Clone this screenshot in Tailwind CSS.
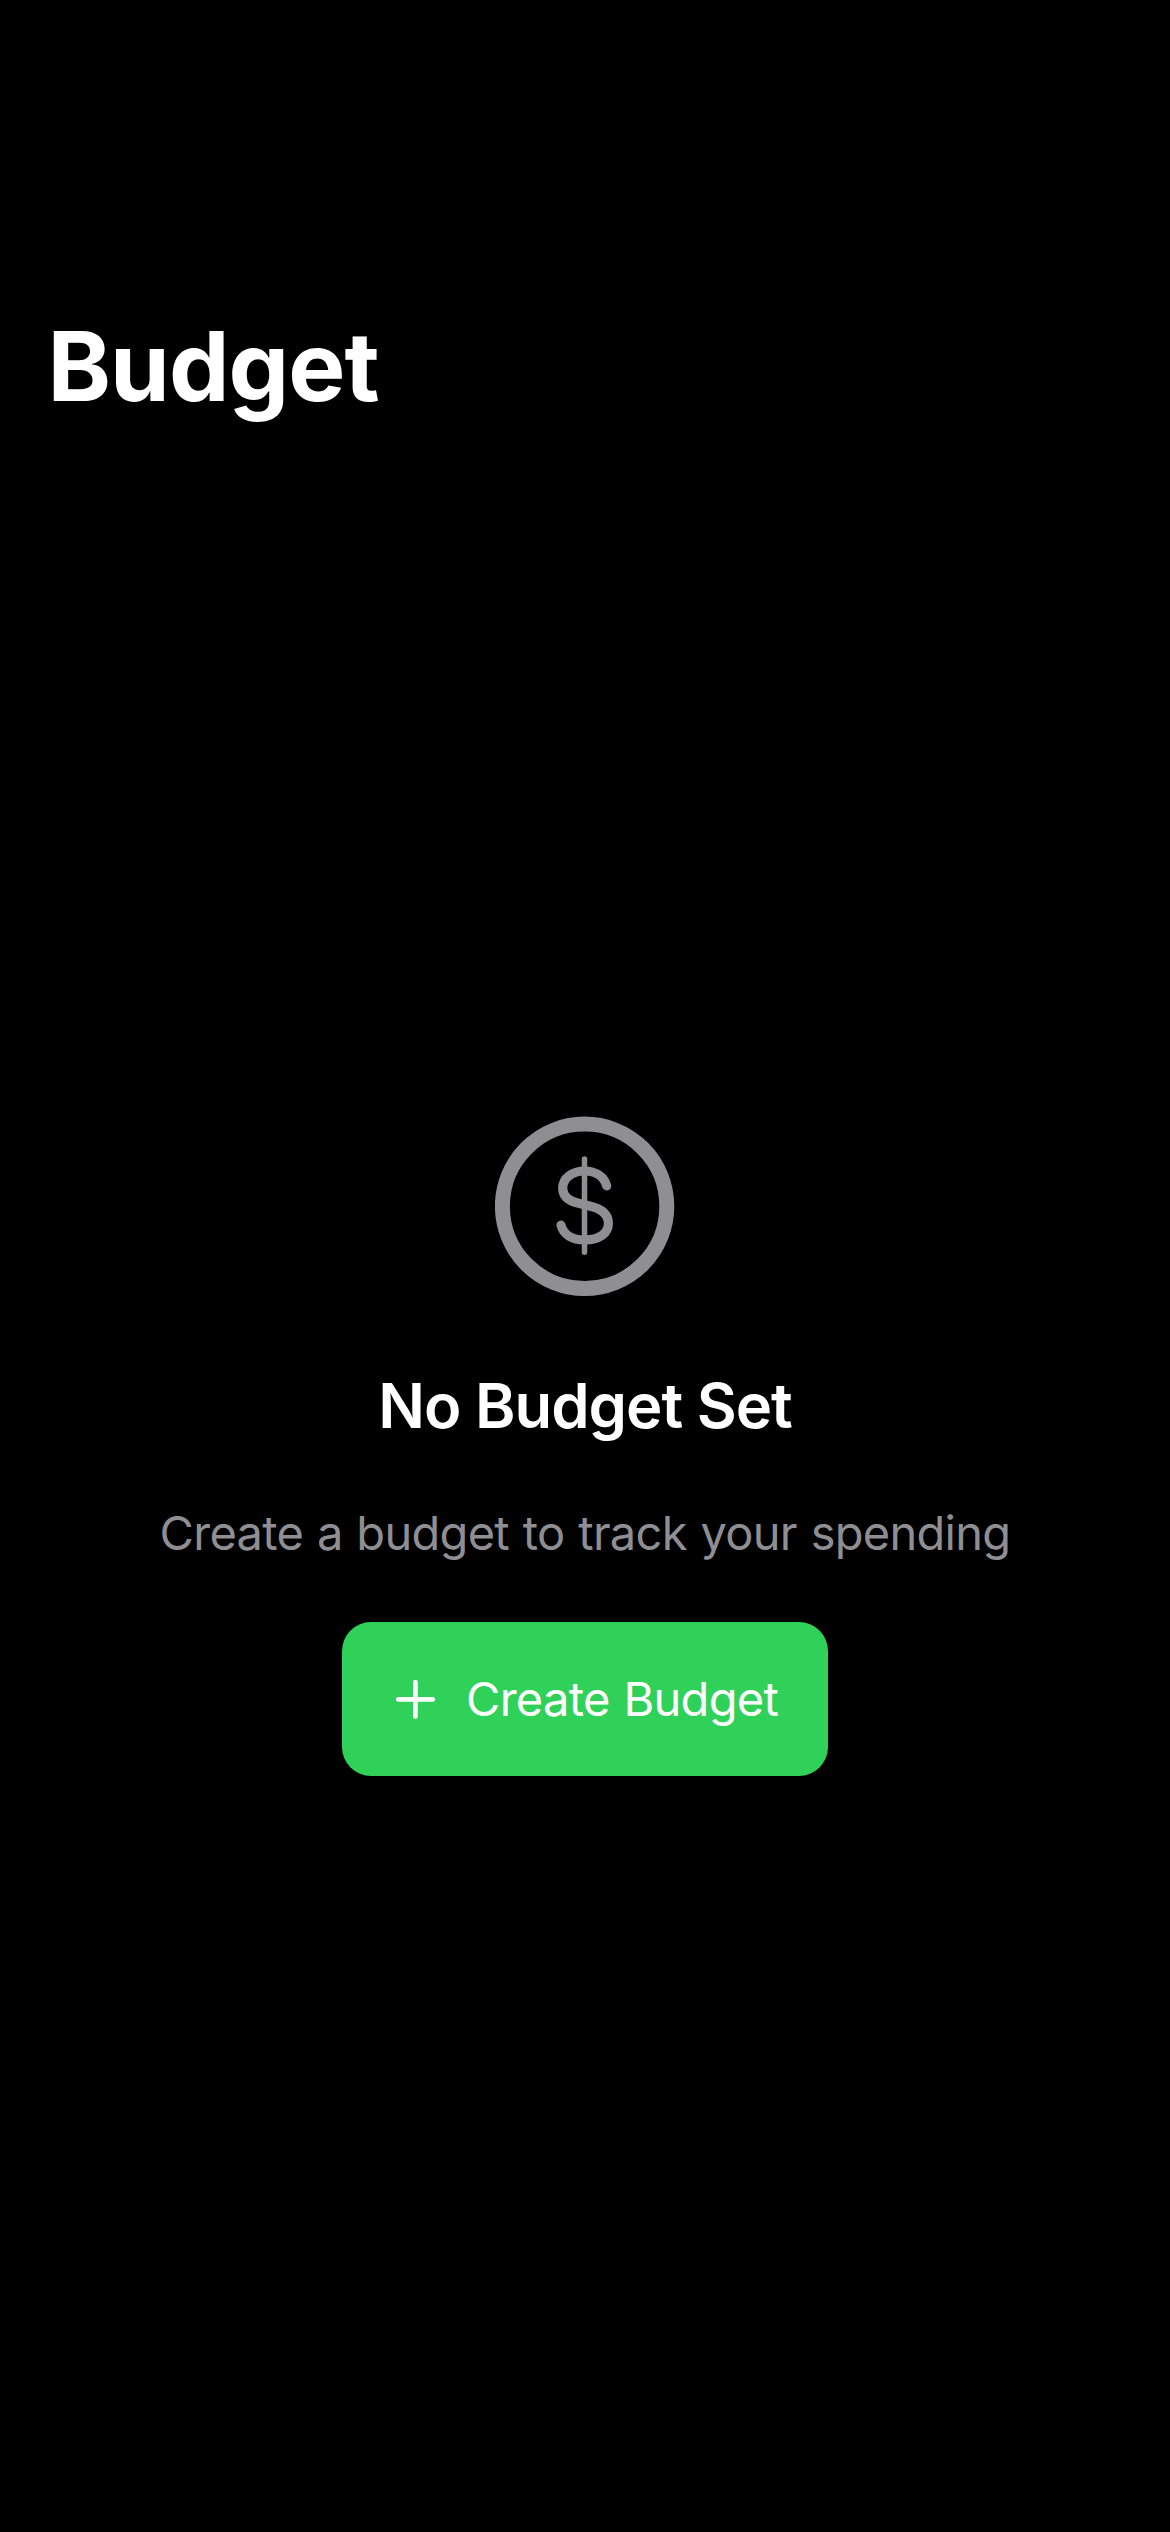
<!DOCTYPE html>
<html lang="en">
<head>
<meta charset="utf-8">
<title>Budget</title>
<script src="https://cdn.jsdelivr.net/npm/@tailwindcss/browser@4"></script>
</head>
<body class="bg-black">
<div class="flex h-[2532px] w-[1170px] flex-col bg-black font-['Inter',sans-serif] text-white">
  <header class="px-[47.5px] pt-[305px]">
    <h1 class="text-[96px] leading-[123px] font-bold tracking-[-0.95px]">Budget</h1>
  </header>
  <main class="flex flex-col items-center pt-[688px]">
    <svg class="h-[180px] w-[180px]" viewBox="0 0 180 180" fill="none" stroke="#8e8e93" stroke-linecap="round">
      <circle cx="89.6" cy="90.3" r="82.2" stroke-width="15"/>
      <path d="M89.5 43V136.3" stroke-width="5.5"/>
      <path d="M111.7 69.8C108.8 60.5 100.5 55 89.9 55C77 55 67.7 62 67.7 72.2C67.7 80.5 73.8 85.2 84.5 87.6L94.5 89.9C107 92.7 113.4 98.2 113.4 107.3C113.4 117.8 104 124 89.6 124C77.2 124 68.4 118.6 66 109.2" stroke-width="9.2"/>
    </svg>
    <h2 class="mt-[71px] text-[61.5px] leading-[77px] font-semibold tracking-[-0.98px]">No Budget Set</h2>
    <p class="mt-14 text-[47px] leading-[66px] tracking-[-0.72px] text-[#8e8e93] [word-spacing:1.3px]">Create a budget to track your spending</p>
    <button class="mt-14 flex h-[154px] w-[486px] items-center gap-[31px] rounded-[29px] bg-[#30d158] pl-[54px]">
      <svg class="h-[39px] w-[39px]" viewBox="0 0 39 39" fill="none" stroke="white" stroke-width="4.7" stroke-linecap="round">
        <path d="M19.4 2.2V36.6M2.3 19.3H36.7"/>
      </svg>
      <span class="text-[47px] leading-[66px] tracking-[-0.7px] whitespace-nowrap [word-spacing:1.3px]">Create Budget</span>
    </button>
  </main>
</div>
</body>
</html>
